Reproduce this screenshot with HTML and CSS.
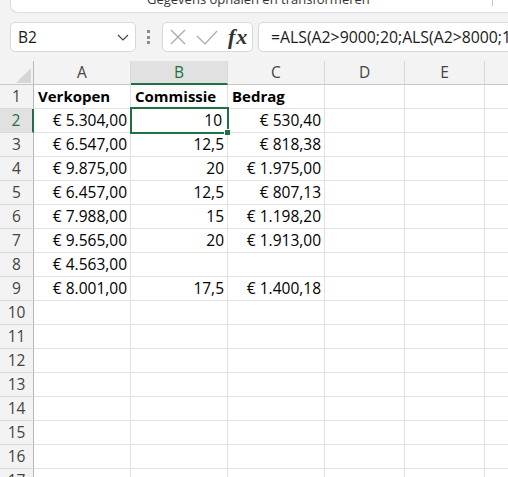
FILE: index.html
```html
<!DOCTYPE html>
<html lang="nl">
<head>
  <meta charset="UTF-8">
  <title>Commissie - Blad1</title>
  <link rel="stylesheet" href="styles.css">
</head>
<body>
  <div class="ribbon">
    <div class="ribbon-box">
      <span class="ribbon-label">Gegevens ophalen en transformeren</span>
      <span class="ribbon-sep"></span>
    </div>
  </div>

  <div class="formula-bar">
    <div class="name-box">
      <span>B2</span>
      <svg class="chevron" width="12" height="7" viewBox="0 0 12 7"><path d="M1 1l5 5 5-5" fill="none" stroke="#444" stroke-width="1.2"/></svg>
    </div>
    <div class="grip"><i></i><i></i><i></i></div>
    <div class="fx-box">
      <svg width="16" height="16" viewBox="0 0 16 16"><path d="M1 1l14 14M15 1L1 15" stroke="#a8a8a8" stroke-width="1.2"/></svg>
      <svg class="check" width="22" height="15" viewBox="0 0 22 15"><path d="M1 6l8 8L21 1" fill="none" stroke="#a8a8a8" stroke-width="1.2"/></svg>
      <span class="fx">fx</span>
    </div>
    <div class="formula-input">=ALS(A2&gt;9000;20;ALS(A2&gt;8000;17,5;ALS(A2&gt;7000;15;ALS(A2&gt;6000;12,5;ALS(A2&gt;5000;10;"")))))</div>
  </div>

  <div class="sheet">
    <div class="row">
      <div class="c corner"><div class="select-all"></div></div>
      <div class="c ch">A</div>
      <div class="c ch sel-col">B</div>
      <div class="c ch">C</div>
      <div class="c ch">D</div>
      <div class="c ch">E</div>
      <div class="c ch"></div>
    </div>
    <div class="row">
      <div class="c rh">1</div>
      <div class="c b">Verkopen</div>
      <div class="c b">Commissie</div>
      <div class="c b">Bedrag</div>
      <div class="c"></div><div class="c"></div><div class="c"></div>
    </div>
    <div class="row">
      <div class="c rh sel-row">2</div>
      <div class="c num">€ 5.304,00</div>
      <div class="c num active">10</div>
      <div class="c num">€ 530,40</div>
      <div class="c"></div><div class="c"></div><div class="c"></div>
    </div>
    <div class="row">
      <div class="c rh">3</div>
      <div class="c num">€ 6.547,00</div>
      <div class="c num">12,5</div>
      <div class="c num">€ 818,38</div>
      <div class="c"></div><div class="c"></div><div class="c"></div>
    </div>
    <div class="row">
      <div class="c rh">4</div>
      <div class="c num">€ 9.875,00</div>
      <div class="c num">20</div>
      <div class="c num">€ 1.975,00</div>
      <div class="c"></div><div class="c"></div><div class="c"></div>
    </div>
    <div class="row">
      <div class="c rh">5</div>
      <div class="c num">€ 6.457,00</div>
      <div class="c num">12,5</div>
      <div class="c num">€ 807,13</div>
      <div class="c"></div><div class="c"></div><div class="c"></div>
    </div>
    <div class="row">
      <div class="c rh">6</div>
      <div class="c num">€ 7.988,00</div>
      <div class="c num">15</div>
      <div class="c num">€ 1.198,20</div>
      <div class="c"></div><div class="c"></div><div class="c"></div>
    </div>
    <div class="row">
      <div class="c rh">7</div>
      <div class="c num">€ 9.565,00</div>
      <div class="c num">20</div>
      <div class="c num">€ 1.913,00</div>
      <div class="c"></div><div class="c"></div><div class="c"></div>
    </div>
    <div class="row">
      <div class="c rh">8</div>
      <div class="c num">€ 4.563,00</div>
      <div class="c num"></div>
      <div class="c num"></div>
      <div class="c"></div><div class="c"></div><div class="c"></div>
    </div>
    <div class="row">
      <div class="c rh">9</div>
      <div class="c num">€ 8.001,00</div>
      <div class="c num">17,5</div>
      <div class="c num">€ 1.400,18</div>
      <div class="c"></div><div class="c"></div><div class="c"></div>
    </div>
    <div class="row">
      <div class="c rh">10</div>
      <div class="c"></div><div class="c"></div><div class="c"></div><div class="c"></div><div class="c"></div><div class="c"></div>
    </div>
    <div class="row">
      <div class="c rh">11</div>
      <div class="c"></div><div class="c"></div><div class="c"></div><div class="c"></div><div class="c"></div><div class="c"></div>
    </div>
    <div class="row">
      <div class="c rh">12</div>
      <div class="c"></div><div class="c"></div><div class="c"></div><div class="c"></div><div class="c"></div><div class="c"></div>
    </div>
    <div class="row">
      <div class="c rh">13</div>
      <div class="c"></div><div class="c"></div><div class="c"></div><div class="c"></div><div class="c"></div><div class="c"></div>
    </div>
    <div class="row">
      <div class="c rh">14</div>
      <div class="c"></div><div class="c"></div><div class="c"></div><div class="c"></div><div class="c"></div><div class="c"></div>
    </div>
    <div class="row">
      <div class="c rh">15</div>
      <div class="c"></div><div class="c"></div><div class="c"></div><div class="c"></div><div class="c"></div><div class="c"></div>
    </div>
    <div class="row">
      <div class="c rh">16</div>
      <div class="c"></div><div class="c"></div><div class="c"></div><div class="c"></div><div class="c"></div><div class="c"></div>
    </div>
    <div class="row">
      <div class="c rh">17</div>
      <div class="c"></div><div class="c"></div><div class="c"></div><div class="c"></div><div class="c"></div><div class="c"></div>
    </div>
  </div>
</body>
</html>
```

FILE: styles.css
```css
html, body {
  margin: 0;
  padding: 0;
  height: 477px;
  overflow: hidden;
}
body {
  font-family: 'Open Sans', 'Noto Sans', sans-serif;
  background-color: #f3f3f3;
  color: #000;
}

/* ribbon group, scrolled up so only its label's lower part shows */
.ribbon {
  height: 13px;
  overflow: hidden;
}
.ribbon-box {
  display: flex;
  align-items: flex-start;
  height: 12px;
  margin-left: 10px;
  background-color: #fff;
  border-left: 1px solid #dcdcdc;
  border-bottom: 1px solid #dcdcdc;
  border-bottom-left-radius: 8px;
  overflow: hidden;
}
.ribbon-label {
  margin-left: 136px;
  margin-top: -10px;
  font-size: 13px;
  line-height: 18px;
  color: #333;
  white-space: nowrap;
}
.ribbon-sep {
  width: 1px;
  height: 6px;
  margin-left: auto;
  margin-right: 15px;
  background-color: #c6c6c6;
}

/* name box + formula input */
.formula-bar {
  display: flex;
  align-items: center;
  height: 48px;
  padding: 0 0 0 10px;
  overflow: hidden;
}
.formula-bar > * {
  flex-shrink: 0;
}
.name-box,
.fx-box,
.formula-input {
  display: flex;
  align-items: center;
  box-sizing: border-box;
  height: 30px;
  background-color: #fff;
  border: 1px solid #d8d8d8;
  border-radius: 5px;
}
.name-box {
  width: 126px;
  padding-left: 7px;
  font-size: 15.5px;
  color: #1a1a1a;
}
.chevron {
  margin-left: auto;
  margin-right: 6px;
}
.grip {
  display: flex;
  flex-direction: column;
  gap: 2.5px;
  margin-left: 11px;
}
.grip i {
  display: block;
  width: 3px;
  height: 3px;
  background-color: #8c8c8c;
}
.fx-box {
  width: 91px;
  margin-left: 12px;
  padding-left: 7px;
}
.check {
  margin-left: 10px;
}
.fx {
  margin-left: 10px;
  font-family: 'Liberation Serif', 'DejaVu Serif', serif;
  font-style: italic;
  font-weight: 700;
  font-size: 22px;
  letter-spacing: 1px;
  color: #333;
  line-height: 1;
}
.formula-input {
  width: 300px;
  margin-left: 5px;
  padding-left: 12px;
  font-size: 15.8px;
  color: #1a1a1a;
  white-space: nowrap;
  overflow: hidden;
}

/* worksheet */
.row {
  display: grid;
  grid-template-columns: 34px 97px 97px 97px 80px 80px 80px;
  height: 24px;
}
.c {
  box-sizing: border-box;
  height: 24px;
  padding: 0 3px 0 4px;
  background-color: #fff;
  border-right: 1px solid #e1e1e1;
  border-bottom: 1px solid #e1e1e1;
  font-size: 15.5px;
  line-height: 23px;
  white-space: nowrap;
  overflow: hidden;
}
.num {
  text-align: right;
}
.b {
  font-weight: 700;
  font-size: 15px;
  padding-left: 4px;
}
.ch,
.rh,
.corner {
  padding: 0;
  background-color: #f3f3f3;
  text-align: center;
  font-size: 15.5px;
  color: #444;
}
.ch {
  border-right-color: #d8d8d8;
  border-bottom-color: #c8c8c8;
}
.rh,
.corner {
  border-right-color: #b8b8b8;
  border-bottom-color: #dadada;
}
.corner {
  display: flex;
  justify-content: flex-end;
  align-items: flex-end;
  padding: 0 2px 1px 0;
  border-bottom-color: #c8c8c8;
}
.select-all {
  width: 15px;
  height: 15px;
  background-color: #d6d6d6;
  clip-path: polygon(100% 0, 100% 100%, 0 100%);
}
.sel-col {
  background-color: #e1e1e1;
  color: #1f7145;
  border-bottom: 2px solid #1f7145;
  line-height: 22px;
}
.sel-row {
  background-color: #e1e1e1;
  color: #1f7145;
  border-right: 2px solid #1f7145;
}

/* active cell outline with fill handle */
.active {
  position: relative;
  overflow: visible;
  padding-right: 5px;
}
.active::before {
  content: "";
  position: absolute;
  left: -1px;
  top: -2px;
  right: -2px;
  bottom: -2px;
  border: 2px solid #1f7145;
}
.active::after {
  content: "";
  position: absolute;
  right: -3px;
  bottom: -3px;
  width: 5px;
  height: 5px;
  background-color: #1f7145;
  border-left: 1px solid #fff;
  border-top: 1px solid #fff;
}
```
